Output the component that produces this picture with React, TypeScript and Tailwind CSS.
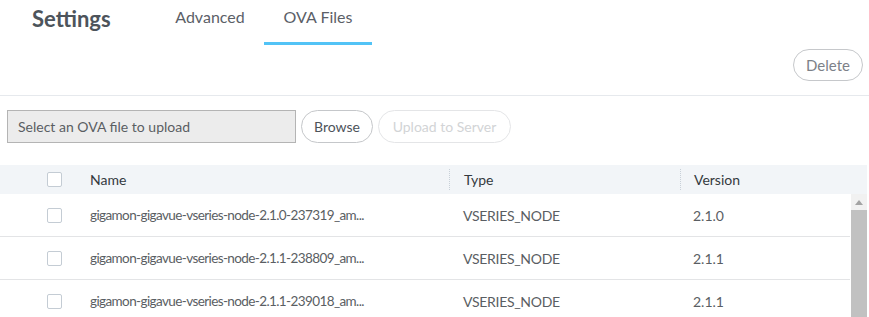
import { useState } from 'react'

interface OvaFile {
  id: string
  name: string
  type: string
  version: string
}

const files: OvaFile[] = [
  { id: '1', name: 'gigamon-gigavue-vseries-node-2.1.0-237319_am...', type: 'VSERIES_NODE', version: '2.1.0' },
  { id: '2', name: 'gigamon-gigavue-vseries-node-2.1.1-238809_am...', type: 'VSERIES_NODE', version: '2.1.1' },
  { id: '3', name: 'gigamon-gigavue-vseries-node-2.1.1-239018_am...', type: 'VSERIES_NODE', version: '2.1.1' },
]

const tabs = ['Advanced', 'OVA Files']

function Checkbox() {
  return <span className="block w-[15px] h-[15px] rounded-[2px] border border-[#c4ccd4] bg-white" />
}

export default function App() {
  const [active, setActive] = useState('OVA Files')

  return (
    <div className="w-[869px] h-[317px] overflow-hidden bg-white text-[#555a60]" style={{ fontFamily: 'Lato, "Open Sans", sans-serif' }}>
      {/* header */}
      <div className="flex h-[45px]">
        <div className="pl-[32px] pt-[5px] w-[156px] text-[22px] font-bold text-[#4d545b] leading-[28px]">Settings</div>
        {tabs.map((tab) => (
          <button
            key={tab}
            onClick={() => setActive(tab)}
            className={`w-[108px] h-[45px] pb-[8px] text-[16px] text-[#5b6067] border-b-[3px] ${
              active === tab ? 'border-[#52c3f6]' : 'border-transparent'
            }`}
          >
            {tab}
          </button>
        ))}
      </div>

      <div className="flex justify-end pt-[4px] pb-[14px] pr-[6px]">
        <button className="w-[70px] h-[32px] rounded-full border border-[#c6c8cb] text-[15px] text-[#7c8188]">Delete</button>
      </div>
      <div className="h-px bg-[#e6e9ed]" />

      {/* upload */}
      <div className="flex items-center gap-[5px] pl-[7px] pt-[14px] pb-[22px]">
        <div className="w-[289px] h-[33px] bg-[#ececec] border border-[#b4b4b4] flex items-center pl-[10px] text-[14px] text-[#5a5e63]">
          Select an OVA file to upload
        </div>
        <button className="w-[72px] h-[33px] rounded-full border border-[#c5c7ca] text-[14px] text-[#4d535a]">Browse</button>
        <button disabled className="w-[133px] h-[33px] rounded-full border border-[#e4e5e7] text-[14px] text-[#d2d4d6]">
          Upload to Server
        </button>
      </div>

      {/* table */}
      <div className="w-[867px]">
        <div className="flex h-[29px] bg-[#f2f5f8] items-center text-[14px] text-[#343a40]">
          <div className="w-[75px] flex justify-end pr-[13px]">
            <Checkbox />
          </div>
          <div className="w-[374px] pl-[15px]">Name</div>
          <div className="w-[231px] h-[21px] flex items-center pl-[14px] border-l border-dotted border-[#c8d0d8]">Type</div>
          <div className="flex-1 h-[21px] flex items-center pl-[13px] border-l border-dotted border-[#c8d0d8]">Version</div>
        </div>
        <div className="flex">
          <div className="w-[851px]">
            {files.map((f) => (
              <div key={f.id} className="flex h-[43px] items-center border-b border-[#e3e4e6] text-[14px] text-[#5a5e63]">
                <div className="w-[75px] flex justify-end pr-[13px]">
                  <Checkbox />
                </div>
                <div className="w-[374px] pl-[15px] whitespace-nowrap text-[13.5px] tracking-[-0.6px]">{f.name}</div>
                <div className="w-[231px] pl-[14px] tracking-[-0.3px]">{f.type}</div>
                <div className="flex-1 pl-[13px]">{f.version}</div>
              </div>
            ))}
          </div>
          <div className="w-[16px] ml-px bg-[#f1f1f1] flex flex-col">
            <div className="h-[16px] flex items-center justify-center">
              <svg width="8" height="5" viewBox="0 0 8 5">
                <polygon points="4,0 8,5 0,5" fill="#a3a3a3" />
              </svg>
            </div>
            <div className="flex-1 bg-[#c1c1c1]" />
          </div>
        </div>
      </div>
    </div>
  )
}
